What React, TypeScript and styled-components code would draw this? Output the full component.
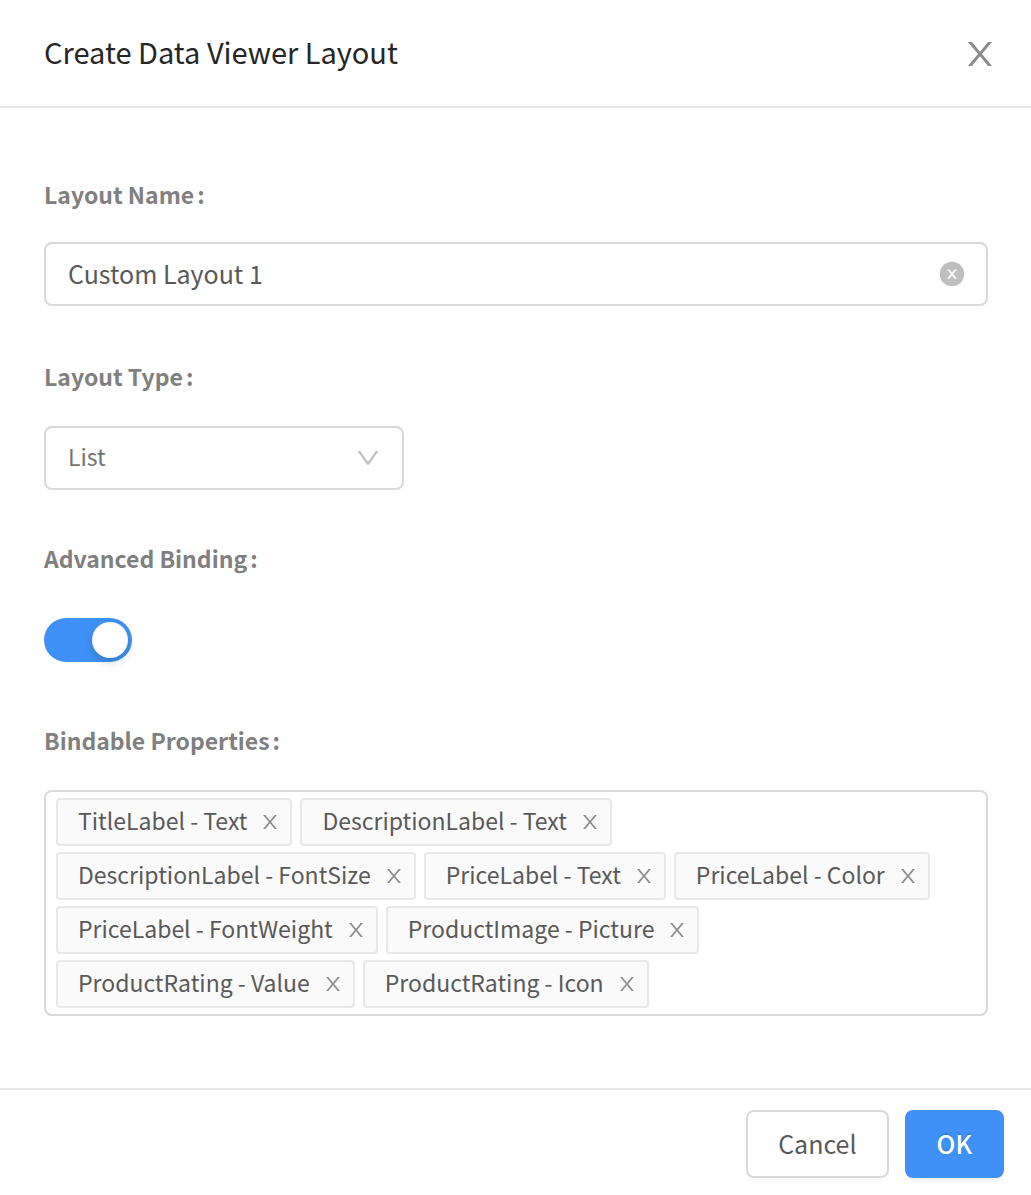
import React, { useState } from "react";
import styled, { createGlobalStyle } from "styled-components";

const GlobalStyle = createGlobalStyle`
  *, *::before, *::after { box-sizing: border-box; }
  body { margin: 0; background: #fff; }
  body, button, input, select {
    font-family: "Noto Sans CJK SC", "Noto Sans CJK JP", "Noto Sans", sans-serif;
    color: #595959;
  }
`;

const Dialog = styled.section`
  display: flex;
  flex-direction: column;
  min-height: 100vh;
`;

const Header = styled.header`
  display: flex;
  align-items: center;
  justify-content: space-between;
  padding: 32px 31px 30px 44px;
  border-bottom: 2px solid #e8e8e8;
`;

const Title = styled.h1`
  margin: 0;
  padding-bottom: 6px;
  font-size: 29px;
  line-height: 38px;
  font-weight: 400;
  color: #262626;
`;

const IconButton = styled.button<{ $size: number; $color: string }>`
  display: flex;
  align-items: center;
  justify-content: center;
  flex: none;
  width: ${(p) => p.$size}px;
  height: ${(p) => p.$size}px;
  padding: 0;
  border: 0;
  background: none;
  color: ${(p) => p.$color};
  cursor: pointer;
`;

const Form = styled.form`
  display: flex;
  flex: 1;
  flex-direction: column;
  gap: 48px;
  padding: 66px 43px 72px 44px;
`;

const Field = styled.div<{ $tight?: boolean }>`
  display: flex;
  flex-direction: column;
  align-items: flex-start;
  gap: ${(p) => (p.$tight ? 28 : 30)}px;
  min-height: 134px;
`;

const Label = styled.label`
  font-size: 23px;
  line-height: 40px;
  font-weight: 700;
  color: #808080;
`;

const Colon = styled.span`
  margin-left: 3px;
`;

const InputBox = styled.div`
  display: flex;
  align-items: center;
  width: 100%;
  height: 64px;
  padding: 0 20px 0 22px;
  border: 2px solid #d9d9d9;
  border-radius: 8px;
`;

const TextInput = styled.input`
  flex: 1;
  min-width: 0;
  height: 100%;
  padding: 0 0 2px;
  border: 0;
  outline: 0;
  background: none;
  font-size: 25px;
`;

const SelectBox = styled.div`
  display: grid;
  align-items: center;
  width: 360px;
  max-width: 100%;
  height: 64px;
  border: 2px solid #d9d9d9;
  border-radius: 8px;

  > * { grid-area: 1 / 1; }
  > svg { justify-self: end; margin-right: 20px; color: #bfbfbf; pointer-events: none; }
`;

const Select = styled.select`
  width: 100%;
  height: 100%;
  padding: 0 22px 4px;
  border: 0;
  outline: 0;
  appearance: none;
  background: none;
  font-size: 23px;
  color: #737373;
`;

const Switch = styled.input`
  appearance: none;
  display: flex;
  width: 88px;
  height: 44px;
  margin: 10px 0;
  padding: 4px;
  border-radius: 22px;
  background: #bfbfbf;
  cursor: pointer;

  &::before {
    content: "";
    width: 36px;
    height: 36px;
    border-radius: 50%;
    background: #fff;
    box-shadow: 0 4px 8px rgba(0, 35, 11, 0.2);
  }

  &:checked { justify-content: flex-end; background: #4091f7; }
`;

const TagList = styled.ul`
  display: flex;
  flex-wrap: wrap;
  gap: 6px 8px;
  width: 100%;
  margin: 0;
  padding: 6px 10px;
  border: 2px solid #d9d9d9;
  border-radius: 8px;
  list-style: none;
`;

const Tag = styled.li`
  display: flex;
  align-items: center;
  gap: 11px;
  height: 48px;
  padding: 0 8px 0 20px;
  border: 2px solid #e8e8e8;
  border-radius: 4px;
  background: #fafafa;
  font-size: 23px;
  line-height: 40px;
  white-space: nowrap;
`;

const TagText = styled.span`
  padding-bottom: 4px;
`;

const Footer = styled.footer`
  display: flex;
  justify-content: flex-end;
  gap: 16px;
  padding: 20px 27px 17px;
  border-top: 2px solid #e8e8e8;
`;

const Button = styled.button<{ $primary?: boolean }>`
  height: 68px;
  padding: 0 30px 2px;
  border: 2px solid ${(p) => (p.$primary ? "#4091f7" : "#d9d9d9")};
  border-radius: 8px;
  background: ${(p) => (p.$primary ? "#4091f7" : "#fff")};
  box-shadow: 0 4px 0 rgba(0, 0, 0, ${(p) => (p.$primary ? 0.04 : 0.016)});
  color: ${(p) => (p.$primary ? "#fff" : "#595959")};
  font-size: 25px;
  font-weight: ${(p) => (p.$primary ? 500 : 400)};
  text-shadow: ${(p) => (p.$primary ? "0 -2px 0 rgba(0, 0, 0, 0.12)" : "none")};
  cursor: pointer;
`;

const glyphs = {
  close:
    "M563.8 512l262.5-312.9c4.4-5.2.7-13.1-6.1-13.1h-79.8c-4.7 0-9.2 2.1-12.3 5.7L511.6 449.8 295.1 191.7c-3-3.6-7.5-5.7-12.3-5.7H203c-6.8 0-10.5 7.9-6.1 13.1L459.4 512 196.9 824.9A7.95 7.95 0 00203 838h79.8c4.7 0 9.2-2.1 12.3-5.7l216.5-258.1 216.5 258.1c3 3.6 7.5 5.7 12.3 5.7h79.8c6.8 0 10.5-7.9 6.1-13.1L563.8 512z",
  down:
    "M884 256h-75c-5.1 0-9.9 2.5-12.9 6.6L512 654.2 227.9 262.6c-3-4.1-7.8-6.6-12.9-6.6h-75c-6.5 0-10.3 7.4-6.5 12.7l352.6 486.1c12.8 17.6 39 17.6 51.7 0l352.6-486.1c3.9-5.3.1-12.7-6.4-12.7z",
  clear:
    "M512 64C264.6 64 64 264.6 64 512s200.6 448 448 448 448-200.6 448-448S759.4 64 512 64zm165.4 618.2l-66-.3L512 563.4l-99.3 118.4-66.1.3c-4.4 0-8-3.5-8-8 0-1.9.7-3.7 1.9-5.2l130.1-155L340.5 359a8.32 8.32 0 01-1.9-5.2c0-4.4 3.6-8 8-8l66.1.3L512 464.6l99.3-118.4 66-.3c4.4 0 8 3.5 8 8 0 1.9-.7 3.7-1.9 5.2L553.5 514l130 155c1.2 1.5 1.9 3.3 1.9 5.2 0 4.4-3.6 8-8 8z",
};

const Icon = ({ name, size }: { name: keyof typeof glyphs; size: number }) => (
  <svg width={size} height={size} viewBox="0 0 1024 1024" fill="currentColor" aria-hidden="true">
    <path d={glyphs[name]} />
  </svg>
);

const properties = [
  "TitleLabel - Text",
  "DescriptionLabel - Text",
  "DescriptionLabel - FontSize",
  "PriceLabel - Text",
  "PriceLabel - Color",
  "PriceLabel - FontWeight",
  "ProductImage - Picture",
  "ProductRating - Value",
  "ProductRating - Icon",
];

export default function App() {
  const [name, setName] = useState("Custom Layout 1");
  const [tags, setTags] = useState(properties);

  return (
    <Dialog role="dialog" aria-labelledby="dialog-title">
      <GlobalStyle />
      <Header>
        <Title id="dialog-title">Create Data Viewer Layout</Title>
        <IconButton type="button" $size={40} $color="#8c8c8c" aria-label="Close">
          <Icon name="close" size={38} />
        </IconButton>
      </Header>
      <Form id="layout-form" onSubmit={(e) => e.preventDefault()}>
        <Field $tight>
          <Label htmlFor="layout-name">Layout Name<Colon>:</Colon></Label>
          <InputBox>
            <TextInput id="layout-name" value={name} onChange={(e) => setName(e.target.value)} />
            <IconButton type="button" $size={28} $color="#bfbfbf" aria-label="Clear name" onClick={() => setName("")}>
              <Icon name="clear" size={28} />
            </IconButton>
          </InputBox>
        </Field>
        <Field>
          <Label htmlFor="layout-type">Layout Type<Colon>:</Colon></Label>
          <SelectBox>
            <Select id="layout-type" defaultValue="List">
              <option>List</option>
            </Select>
            <Icon name="down" size={28} />
          </SelectBox>
        </Field>
        <Field>
          <Label htmlFor="advanced-binding">Advanced Binding<Colon>:</Colon></Label>
          <Switch id="advanced-binding" type="checkbox" role="switch" defaultChecked />
        </Field>
        <Field>
          <Label as="span" id="properties-label">Bindable Properties<Colon>:</Colon></Label>
          <TagList aria-labelledby="properties-label">
            {tags.map((tag) => (
              <Tag key={tag}>
                <TagText>{tag}</TagText>
                <IconButton
                  type="button"
                  $size={24}
                  $color="#8c8c8c"
                  aria-label={`Remove ${tag}`}
                  onClick={() => setTags(tags.filter((t) => t !== tag))}
                >
                  <Icon name="close" size={22} />
                </IconButton>
              </Tag>
            ))}
          </TagList>
        </Field>
      </Form>
      <Footer>
        <Button type="button">Cancel</Button>
        <Button type="submit" form="layout-form" $primary>OK</Button>
      </Footer>
    </Dialog>
  );
}
